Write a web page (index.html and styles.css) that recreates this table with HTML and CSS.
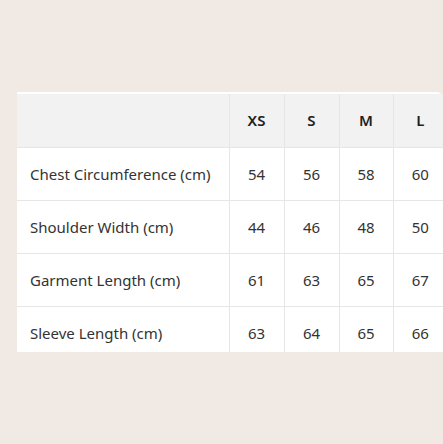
FILE: index.html
```html
<!DOCTYPE html>
<html>
<head>
<meta charset="utf-8">
<link rel="stylesheet" href="styles.css">
</head>
<body>
<div class="wrap">
  <table class="size-table">
    <colgroup>
      <col class="c-label">
      <col class="c-xs">
      <col class="c-s">
      <col class="c-m">
      <col class="c-l">
    </colgroup>
    <thead>
      <tr>
        <th class="label"></th>
        <th>XS</th>
        <th>S</th>
        <th>M</th>
        <th>L</th>
      </tr>
    </thead>
    <tbody>
      <tr><td class="label">Chest Circumference (cm)</td><td>54</td><td>56</td><td>58</td><td>60</td></tr>
      <tr><td class="label">Shoulder Width (cm)</td><td>44</td><td>46</td><td>48</td><td>50</td></tr>
      <tr><td class="label">Garment Length (cm)</td><td>61</td><td>63</td><td>65</td><td>67</td></tr>
      <tr><td class="label">Sleeve Length (cm)</td><td>63</td><td>64</td><td>65</td><td>66</td></tr>
    </tbody>
  </table>
</div>
</body>
</html>
```
FILE: styles.css
```css
html, body {
  margin: 0;
  padding: 0;
  background: #f1e9e4;
  overflow: hidden;
}
body {
  padding-top: 92px;
  font-family: "Noto Sans", "Open Sans", sans-serif;
  color: #333;
}
.wrap {
  margin-left: 17px;
  width: 426px;
  height: 258px;
  background: #fff;
  padding-top: 2px;
  border-top-right-radius: 6px;
  overflow: hidden;
}
.size-table {
  border-collapse: collapse;
  table-layout: fixed;
  width: 430px;
  font-size: 15px;
  white-space: nowrap;
}
.c-label { width: 212px; }
.c-xs, .c-s { width: 55px; }
.c-m, .c-l { width: 54px; }
.size-table th,
.size-table td {
  height: 53px;
  padding: 0;
  text-align: center;
  border-left: 1px solid #e6e6e6;
  border-bottom: 1px solid #e6e6e6;
  box-sizing: border-box;
}
.size-table th {
  background: #f2f2f2;
  font-weight: 600;
  color: #222;
}
.size-table .label {
  text-align: left;
  padding-left: 13px;
  border-left: none;
  font-weight: 400;
}
```
